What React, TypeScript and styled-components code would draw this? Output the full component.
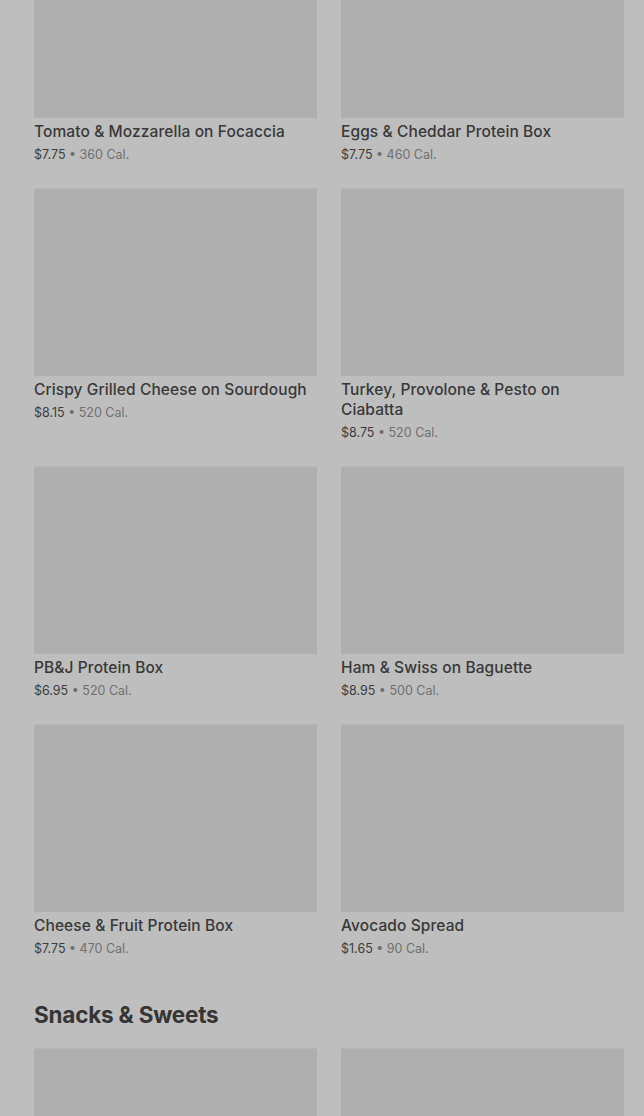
import * as React from 'react';
import styled, { createGlobalStyle } from 'styled-components';

const GlobalStyle = createGlobalStyle`
  html, body {
    margin: 0;
    padding: 0;
    background: #bebebe;
    overflow: hidden;
  }
  body {
    font-family: Inter, "Noto Sans", sans-serif;
    -webkit-font-smoothing: antialiased;
  }
`;

type Item = { name: string; price: string; cal: string };

const sandwiches: Item[] = [
  { name: 'Tomato & Mozzarella on Focaccia', price: '$7.75', cal: '360 Cal.' },
  { name: 'Eggs & Cheddar Protein Box', price: '$7.75', cal: '460 Cal.' },
  { name: 'Crispy Grilled Cheese on Sourdough', price: '$8.15', cal: '520 Cal.' },
  { name: 'Turkey, Provolone & Pesto on Ciabatta', price: '$8.75', cal: '520 Cal.' },
  { name: 'PB&J Protein Box', price: '$6.95', cal: '520 Cal.' },
  { name: 'Ham & Swiss on Baguette', price: '$8.95', cal: '500 Cal.' },
  { name: 'Cheese & Fruit Protein Box', price: '$7.75', cal: '470 Cal.' },
  { name: 'Avocado Spread', price: '$1.65', cal: '90 Cal.' },
];

const snacks: Item[] = [
  { name: '', price: '', cal: '' },
  { name: '', price: '', cal: '' },
];

const Page = styled.main`
  margin-top: -70px;
  padding: 0 20px 0 34px;
`;

const Grid = styled.div`
  display: grid;
  grid-template-columns: 283px 283px;
  column-gap: 24px;
  row-gap: 25px;
`;

const Card = styled.div`
  display: flex;
  flex-direction: column;
`;

const Photo = styled.div`
  height: 188px;
  background: #afafaf;
  box-shadow: inset 0 1px 0 #b6b6b6;
`;

const Name = styled.div`
  margin-top: 4px;
  font-size: 15.5px;
  line-height: 20px;
  font-weight: 500;
  color: #383838;
  letter-spacing: 0.1px;
`;

const Meta = styled.div`
  margin-top: 5px;
  font-size: 12.5px;
  line-height: 16px;
  color: #3c3c3c;
`;

const Cal = styled.span`
  color: #6f6f6f;
`;

const SectionTitle = styled.h2`
  margin: 44px 0 19px;
  font-size: 22.5px;
  line-height: 28px;
  font-weight: 700;
  color: #353535;
  letter-spacing: -0.2px;
`;

const MenuCard = ({ item }: { item: Item }) => (
  <Card>
    <Photo />
    {item.name && (
      <>
        <Name>{item.name}</Name>
        <Meta>
          {item.price}
          <Cal> • {item.cal}</Cal>
        </Meta>
      </>
    )}
  </Card>
);

export default function App() {
  return (
    <>
      <GlobalStyle />
      <Page>
        <Grid>
          {sandwiches.map((item) => (
            <MenuCard key={item.name} item={item} />
          ))}
        </Grid>
        <SectionTitle>Snacks &amp; Sweets</SectionTitle>
        <Grid>
          {snacks.map((item, i) => (
            <MenuCard key={i} item={item} />
          ))}
        </Grid>
      </Page>
    </>
  );
}
